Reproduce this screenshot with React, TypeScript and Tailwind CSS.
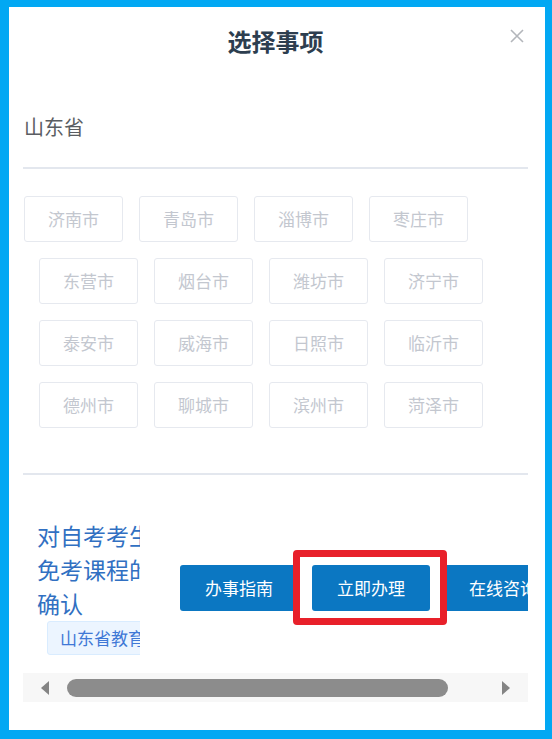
const cityRows = [
  ['济南市', '青岛市', '淄博市', '枣庄市'],
  ['东营市', '烟台市', '潍坊市', '济宁市'],
  ['泰安市', '威海市', '日照市', '临沂市'],
  ['德州市', '聊城市', '滨州市', '菏泽市'],
]

const font = { fontFamily: '"Noto Sans CJK SC", "Noto Sans", sans-serif' }

function CityButton({ name }: { name: string }) {
  return (
    <div className="w-[99px] h-[46px] flex items-center justify-center border border-[#e6e9ef] rounded-[3px] text-[17px] text-[#c3c7cf] bg-white">
      {name}
    </div>
  )
}

function ActionButton({ label }: { label: string }) {
  return (
    <div className="shrink-0 w-[118px] h-[46px] flex items-center justify-center rounded-[3px] bg-[#0b77c2] text-white text-[17px] whitespace-nowrap">
      {label}
    </div>
  )
}

export default function App() {
  return (
    <div
      className="w-[552px] h-[739px] bg-[#02a8f3] pt-[7px] pl-[9px] pr-[7px] pb-[9px]"
      style={font}
    >
      <div className="relative h-full bg-white flex flex-col px-[14px] pr-[17px]">
        {/* header */}
        <div className="pt-[19px] text-center text-[24px] leading-[30px] font-bold text-[#2d3e4f]">
          选择事项
        </div>
        <button className="absolute top-[21px] right-[20px] w-[16px] h-[16px]">
          <svg viewBox="0 0 16 16" className="w-full h-full" fill="none" stroke="#b3b6bb" strokeWidth="1.6">
            <path d="M2 2 L14 14 M14 2 L2 14" />
          </svg>
        </button>

        <div className="mt-[57px] pl-[1px] text-[20px] leading-[28px] text-[#5a5d62]">山东省</div>
        <div className="mt-[26px] h-[2px] bg-[#e3e7ee]" />

        {/* cities */}
        <div className="mt-[27px] flex flex-col gap-[16px]">
          {cityRows.map((row, i) => (
            <div key={i} className={i === 0 ? 'flex gap-[16px] pl-[1px]' : 'flex gap-[16px] pl-[16px]'}>
              {row.map((c) => (
                <CityButton key={c} name={c} />
              ))}
            </div>
          ))}
        </div>

        <div className="mt-[45px] h-[2px] bg-[#e3e7ee]" />

        {/* item row, scrolled horizontally */}
        <div className="overflow-hidden">
          <div className="flex items-center pt-[43px] pb-[18px] pl-[14px]">
            <div className="shrink-0 w-[103px] overflow-hidden">
              <div className="text-[23px] leading-[34px] text-[#3170c2] whitespace-nowrap">
                <div>对自考考生</div>
                <div>免考课程的</div>
                <div>确认</div>
              </div>
              <div className="ml-[10px] mt-[1px] w-[130px] h-[34px] flex items-center pl-[12px] bg-[#ecf5ff] border border-[#d9ecff] rounded-[3px] text-[17px] text-[#3f78d6] whitespace-nowrap">
                山东省教育厅
              </div>
            </div>
            <div className="flex gap-[14px] ml-[40px] mt-[2px]">
              <ActionButton label="办事指南" />
              <div className="relative shrink-0">
                <div className="absolute -left-[19px] -top-[15px] w-[154px] h-[75px] border-[7px] border-[#e8202a] rounded-[4px] bg-white" />
                <div className="relative z-10">
                  <ActionButton label="立即办理" />
                </div>
              </div>
              <ActionButton label="在线咨询" />
            </div>
          </div>
        </div>

        {/* horizontal scrollbar */}
        <div className="h-[29px] bg-[#f7f7f7] flex items-center">
          <div className="w-[44px] flex justify-center">
            <div className="w-0 h-0 border-y-[7px] border-y-transparent border-r-[8px] border-r-[#848484]" />
          </div>
          <div className="w-[381px] h-[18px] rounded-full bg-[#8c8c8c]" />
          <div className="flex-1 flex justify-end pr-[18px]">
            <div className="w-0 h-0 border-y-[7px] border-y-transparent border-l-[8px] border-l-[#848484]" />
          </div>
        </div>
      </div>
    </div>
  )
}
